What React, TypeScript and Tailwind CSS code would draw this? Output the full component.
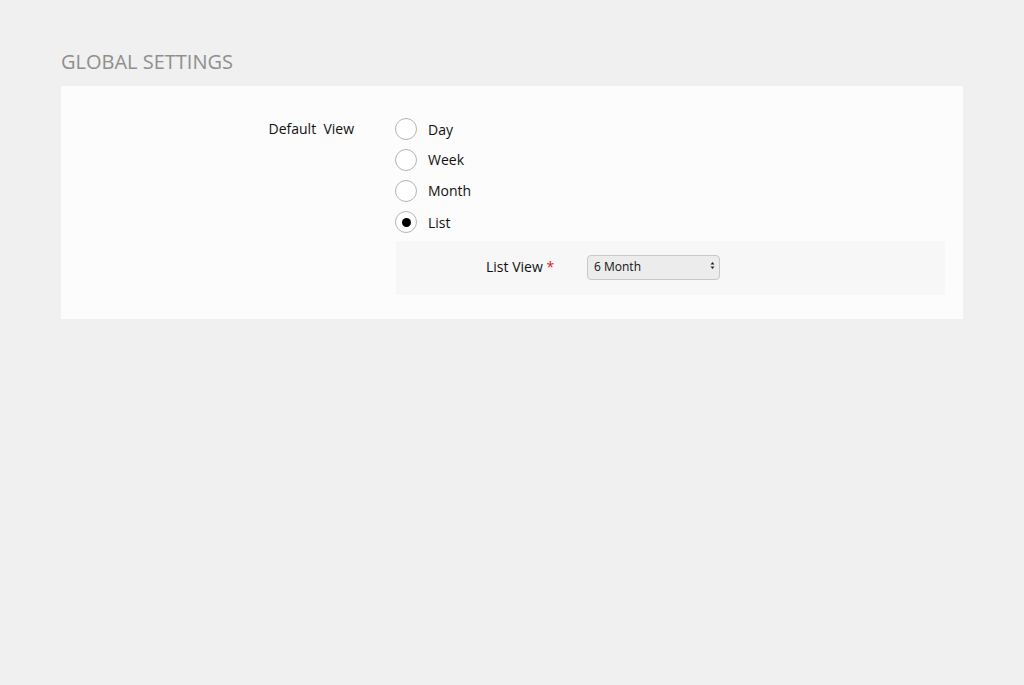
import React, { useState } from "react";

const font = { fontFamily: '"Open Sans", "Noto Sans", sans-serif' };

function Radio({ label, checked, onClick, h }: { label: string; checked: boolean; onClick: () => void; h: string }) {
  return (
    <div className={`flex items-center cursor-pointer ${h}`} onClick={onClick}>
      <div className="-ml-[1px] w-[22px] h-[22px] rounded-full border border-[#b4b4b4] bg-white flex items-center justify-center">
        {checked && <div className="w-[9px] h-[9px] rounded-full bg-black" />}
      </div>
      <span className="ml-[11px] text-[14px] text-[#111]">{label}</span>
    </div>
  );
}

const rows: [string, string][] = [
  ["Day", "h-[30px]"],
  ["Week", "h-[31px]"],
  ["Month", "h-[31px]"],
  ["List", "h-[32px]"],
];

export default function App() {
  const [view, setView] = useState("List");
  return (
    <div className="min-h-[685px] w-full bg-[#f0f0f0] pt-[48px] pl-[61px]" style={font}>
      <h1 className="text-[20px] leading-[28px] text-[#8f8f8f] font-normal">GLOBAL SETTINGS</h1>
      <div className="mt-[10px] w-[902px] bg-[#fcfcfc] pt-[28px] pb-[24px] pr-[18px] flex">
        <div className="w-[293px] text-right text-[14px] text-[#111] pt-[5px] leading-[20px]">
          Default&nbsp; View
        </div>
        <div className="ml-[42px] flex-1">
          {rows.map(([v, h]) => (
            <Radio key={v} label={v} h={h} checked={view === v} onClick={() => setView(v)} />
          ))}
          <div className="mt-[3px] h-[54px] bg-[#f7f7f7] flex items-center pb-[3px]">
            <div className="ml-[90px] w-[101px] text-[14px] text-[#111]">
              List View <span className="text-[#e02020]">*</span>
            </div>
            <div className="relative">
              <select
                defaultValue="6 Month"
                className="appearance-none w-[133px] h-[25px] rounded-[4px] border border-[#c8c8c8] bg-[#ececec] pl-[6px] text-[12px] text-[#111] outline-none"
                style={font}
              >
                <option>1 Month</option>
                <option>3 Month</option>
                <option>6 Month</option>
                <option>12 Month</option>
              </select>
              <svg className="absolute right-[5px] top-[8px] pointer-events-none" width="5" height="9" viewBox="0 0 5 9">
                <path d="M0.5 3.5 L2.5 1 L4.5 3.5 Z" fill="#222" />
                <path d="M0.5 5.5 L2.5 8 L4.5 5.5 Z" fill="#222" />
              </svg>
            </div>
          </div>
        </div>
      </div>
    </div>
  );
}
